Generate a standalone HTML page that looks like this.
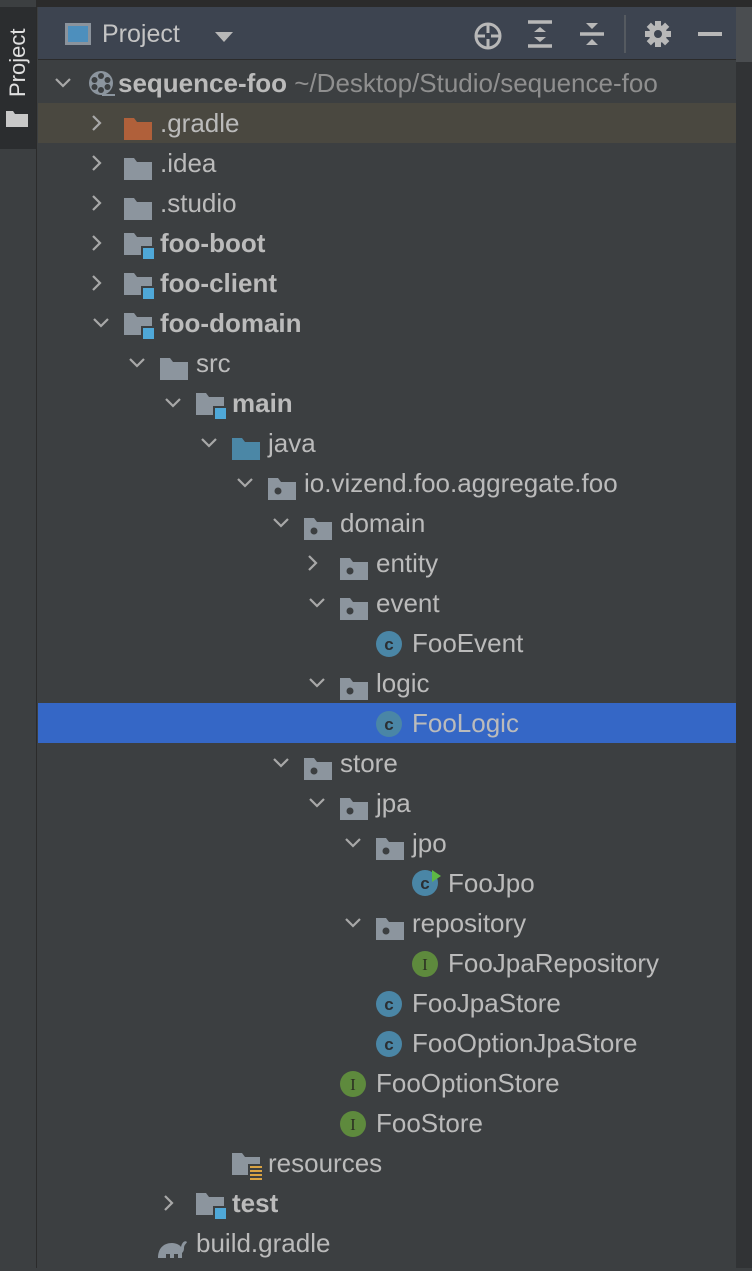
<!DOCTYPE html>
<html><head><style>
*{margin:0;padding:0;box-sizing:border-box}
body{width:752px;height:1268px;background:#3c3f41;position:relative;overflow:hidden;font-family:"Liberation Sans",sans-serif;color:#bbbbbb}
.stripe{position:absolute;left:0;top:0;width:37px;height:1268px;background:#3c3f41;border-right:1px solid #2b2b2b}
.tab{position:absolute;left:0;top:7px;width:36px;height:142px;background:#2b2d2f}
.tabtxt{position:absolute;left:5px;top:90px;transform:rotate(-90deg);transform-origin:0 0;font-size:22px;color:#e0e0e0;white-space:nowrap}
.topbar{position:absolute;left:0;top:0;width:752px;height:7px;background:#2b2b2b}
.header{position:absolute;left:38px;top:7px;width:698px;height:53px;background:#3d4450;border-bottom:1px solid #2b2b2b}
.scroll{position:absolute;left:736px;top:7px;width:16px;height:1261px;background:#313335}
.row{position:absolute;left:38px;width:698px;height:40px;font-size:26px;line-height:40px;white-space:nowrap}
.row span.t{position:absolute;top:0}
.chev{position:absolute;top:11px}
.ic{position:absolute;top:8px}
b{font-weight:bold}
</style></head><body>
<div class="topbar"></div>
<div class="stripe"></div>
<div class="tab"><div class="tabtxt">Project</div>
<svg style="position:absolute;left:6px;top:104px" width="22" height="16"><path d="M0 0h7l2 3h13v13H0z" fill="#c8c8c8"/></svg></div>
<div class="header">
<svg style="position:absolute;left:26px;top:15px" width="28" height="24"><rect x="1" y="1" width="26" height="22" fill="#8b939c"/><rect x="4" y="4" width="20" height="16" fill="#4d8fbd"/></svg>
<div style="position:absolute;left:64px;top:13px;font-size:25px;color:#c4c4c4">Project</div>
<svg style="position:absolute;left:176px;top:24px" width="20" height="12"><path d="M1 1h18L10 11z" fill="#b8b8b8"/></svg>
<svg style="position:absolute;left:435px;top:14px" width="30" height="30"><circle cx="15" cy="15" r="12" fill="none" stroke="#b8b8b8" stroke-width="3"/><path d="M15 3v9M15 18v9M3 15h9M18 15h9" stroke="#b8b8b8" stroke-width="3"/></svg>
<svg style="position:absolute;left:489px;top:13px" width="26" height="30"><path d="M1 2h24M1 26h24" stroke="#b8b8b8" stroke-width="3.5"/><path d="M7 12l6-5 6 5zM7 17l6 5 6-5z" fill="#b8b8b8"/></svg>
<svg style="position:absolute;left:541px;top:13px" width="26" height="30"><path d="M1 14h24" stroke="#b8b8b8" stroke-width="3.5"/><path d="M7 3l6 6 6-6zM7 25l6-6 6 6z" fill="#b8b8b8"/></svg>
<div style="position:absolute;left:586px;top:8px;width:2px;height:38px;background:#555a60"></div>
<svg style="position:absolute;left:606px;top:13px" width="28" height="28"><g fill="#b8b8b8" transform="translate(14 14)"><circle r="9"/><rect x="-3" y="-13" width="6" height="26"/><rect x="-3" y="-13" width="6" height="26" transform="rotate(45)"/><rect x="-3" y="-13" width="6" height="26" transform="rotate(90)"/><rect x="-3" y="-13" width="6" height="26" transform="rotate(135)"/></g><circle cx="14" cy="14" r="4" fill="#3d4450"/></svg>
<div style="position:absolute;left:660px;top:25px;width:24px;height:4px;background:#b8b8b8"></div>
</div>
<div class="scroll"><div style="width:16px;height:55px;background:#4a4d50"></div></div>
<div id="tree"></div>
<script>
const rows=[
[0,'v','proj','sequence-foo',1],
[1,'>','orange','.gradle'],
[1,'>','gray','.idea'],
[1,'>','gray','.studio'],
[1,'>','mod','foo-boot',1],
[1,'>','mod','foo-client',1],
[1,'v','mod','foo-domain',1],
[2,'v','gray','src'],
[3,'v','mod','main',1],
[4,'v','blue','java'],
[5,'v','pkg','io.vizend.foo.aggregate.foo'],
[6,'v','pkg','domain'],
[7,'>','pkg','entity'],
[7,'v','pkg','event'],
[8,'','cls','FooEvent'],
[7,'v','pkg','logic'],
[8,'','cls','FooLogic'],
[6,'v','pkg','store'],
[7,'v','pkg','jpa'],
[8,'v','pkg','jpo'],
[9,'','jpo','FooJpo'],
[8,'v','pkg','repository'],
[9,'','ifc','FooJpaRepository'],
[8,'','cls','FooJpaStore'],
[8,'','cls','FooOptionJpaStore'],
[7,'','ifc','FooOptionStore'],
[7,'','ifc','FooStore'],
[4,'','res','resources'],
[3,'>','mod','test',1],
[2,'','grad','build.gradle']];
const folder=(c)=>`<path d="M0 0h10l3 4h15v18H0z" fill="${c}"/>`;
const icons={
gray:`<svg width="28" height="24">${folder('#8c959e')}</svg>`,
orange:`<svg width="28" height="24">${folder('#b0603a')}</svg>`,
blue:`<svg width="28" height="24">${folder('#4b87a6')}</svg>`,
mod:`<svg width="32" height="28">${folder('#8c959e')}<rect x="17" y="13" width="13" height="13" fill="#3c3f41"/><rect x="19" y="15" width="11" height="11" fill="#4fa8d8"/></svg>`,
res:`<svg width="32" height="28">${folder('#8c959e')}<rect x="16" y="11" width="15" height="16" fill="#3c3f41"/><path d="M18 14h12M18 18h12M18 22h12M18 26h12" stroke="#d9a343" stroke-width="2"/></svg>`,
pkg:`<svg width="28" height="24">${folder('#8c959e')}<circle cx="10" cy="13" r="3.5" fill="#3c3f41"/></svg>`,
cls:`<svg width="28" height="28"><circle cx="13" cy="13" r="13" fill="#4a86a6"/><text x="13" y="19" font-family="Liberation Sans" font-size="17" font-weight="bold" fill="#2b2f33" text-anchor="middle">c</text></svg>`,
jpo:`<svg width="30" height="28"><circle cx="13" cy="14" r="13" fill="#4a86a6"/><text x="13" y="20" font-family="Liberation Sans" font-size="17" font-weight="bold" fill="#2b2f33" text-anchor="middle">c</text><path d="M20 1l9 6-9 6z" fill="#5eb844"/></svg>`,
ifc:`<svg width="28" height="28"><circle cx="13" cy="13" r="13" fill="#5e8a3d"/><text x="13" y="19" font-family="Liberation Serif" font-size="17" fill="#2b2f22" text-anchor="middle">I</text></svg>`,
proj:`<svg width="28" height="28"><circle cx="13" cy="13" r="12" fill="#8c959e"/><g fill="#3c3f41"><circle cx="13" cy="6" r="3"/><circle cx="13" cy="20" r="3"/><circle cx="6.5" cy="10" r="3"/><circle cx="19.5" cy="10" r="3"/><circle cx="6.5" cy="17" r="3"/><circle cx="19.5" cy="17" r="3"/></g><path d="M14 25h13" stroke="#8c959e" stroke-width="2"/></svg>`,
grad:`<svg width="32" height="26"><path d="M2 24c0-9 5-15 14-15 4 0 8 2 9 4 1-5 4-7 6-5-1 2-3 3-3 6 0 3-1 4-2 5v5h-4v-4h-4v4h-4v-4h-4v4H2z" fill="#8c959e"/></svg>`
};
let h='';
rows.forEach((r,i)=>{
const [L,ch,ic,t,bold]=r;const top=63+40*i;
let bg='';
if(i==1)bg='background:#4a4840;';
if(t=='FooLogic')bg='background:#3567c6;';
let iconL=L==0?50:86+36*(L-1);
let textL=L==0?80:122+36*(L-1);
let chevL=iconL-36+4;
if(L==0)chevL=16;
let s=`<div class="row" style="top:${top}px;${bg}">`;
if(ch=='v')s+=`<svg class="chev" style="left:${chevL}px;top:14px" width="18" height="12"><path d="M2 2l7 7 7-7" fill="none" stroke="#a8a8a8" stroke-width="2.2"/></svg>`;
if(ch=='>')s+=`<svg class="chev" style="left:${chevL-1}px;top:11px" width="12" height="18"><path d="M2 2l7 7-7 7" fill="none" stroke="#a8a8a8" stroke-width="2.2"/></svg>`;
let it=(ic=='cls'||ic=='ifc')?7:(ic=='jpo'?5:(ic=='mod'||ic=='res')?9:10);
if(ic=='proj')it=6;
if(ic=='grad')it=8;
let il=(ic=='grad')?iconL-4:iconL;
s+=`<div class="ic" style="left:${il}px;top:${it}px">${icons[ic]}</div>`;
let txt=bold?`<b>${t}</b>`:t;
if(L==0)txt+=` <span style="color:#8f8f8f">~/Desktop/Studio/sequence-foo</span>`;
s+=`<span class="t" style="left:${textL}px">${txt}</span></div>`;
h+=s;});
document.getElementById('tree').innerHTML=h;
</script>
</body></html>
